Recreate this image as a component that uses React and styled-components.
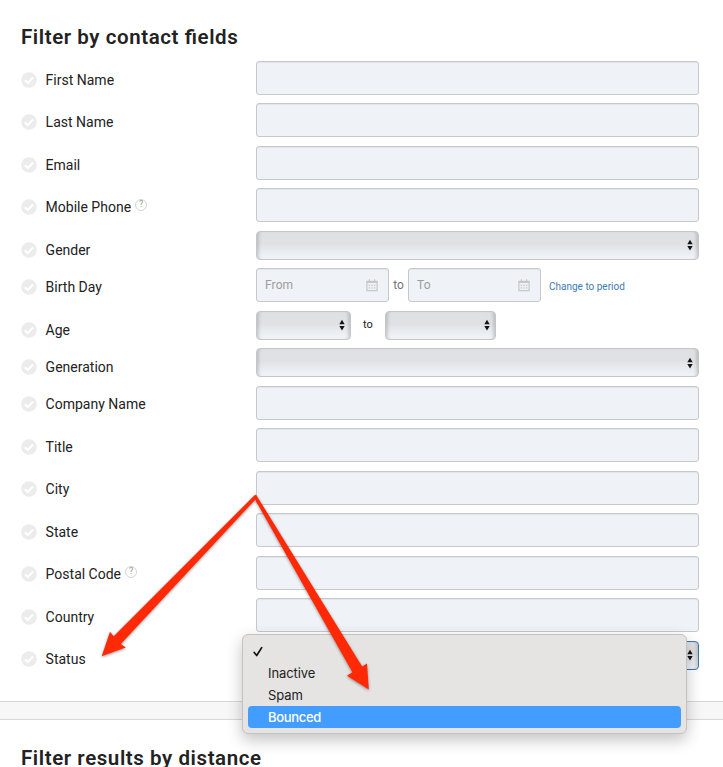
import React from "react";
import styled, { createGlobalStyle, css } from "styled-components";

const fields = [
  { label: "First Name", type: "input" },
  { label: "Last Name", type: "input" },
  { label: "Email", type: "input" },
  { label: "Mobile Phone", type: "input", help: true },
  { label: "Gender", type: "select" },
  { label: "Birth Day", type: "dates" },
  { label: "Age", type: "range" },
  { label: "Generation", type: "select" },
  { label: "Company Name", type: "input" },
  { label: "Title", type: "input" },
  { label: "City", type: "input" },
  { label: "State", type: "input" },
  { label: "Postal Code", type: "input", help: true },
  { label: "Country", type: "input" },
  { label: "Status", type: "status" },
];

const statuses = ["", "Inactive", "Spam", "Bounced"];

const CheckCircle = () => (
  <svg width="16" height="16" viewBox="0 0 16 16">
    <circle cx="8" cy="8" r="7.8" fill="#ececec" />
    <path
      d="M3.9 8.3 6.8 11 12.1 5.5"
      fill="none"
      stroke="#fff"
      strokeWidth="2.2"
    />
  </svg>
);

const CalendarIcon = () => (
  <svg width="12" height="13" viewBox="0 0 12 13">
    <path
      d="M.9 2.3h10.2v9.4H.9zM.9 3.4h10.2M3.3.3v2.6M8.7.3v2.6"
      fill="none"
      stroke="#c6c7c8"
      strokeWidth="1.2"
    />
    <path
      d="M2.6 6.4h1.5m1.1 0h1.5m1.1 0h1.5M2.6 8.8h1.5m1.1 0h1.5m1.1 0h1.5"
      stroke="#c6c7c8"
      strokeWidth="1.2"
    />
  </svg>
);

const Arrows = () => (
  <svg width="6" height="12" viewBox="0 0 6 12">
    <path d="M3 .7 5.7 5.2H.3zM3 11.5.3 7h5.4z" fill="#151515" />
  </svg>
);

const Tick = () => (
  <svg width="10" height="11" viewBox="0 0 10 11">
    <path
      d="M1.2 6.5 3.7 9.5 8.7 1.6"
      fill="none"
      stroke="#111"
      strokeWidth="1.7"
      strokeLinecap="round"
      strokeLinejoin="round"
    />
  </svg>
);

const DateInput = ({ placeholder }) => (
  <DateBox>
    {placeholder}
    <CalendarIcon />
  </DateBox>
);

const SelectBox = ({ width, active }) => (
  <Select $width={width} $active={active}>
    <Arrows />
  </Select>
);

const StatusSelect = () => (
  <StatusWrapper>
    <SelectBox active />
    <Menu>
      {statuses.map((status) => (
        <Option key={status} $selected={status === "Bounced"}>
          <OptionTick>{!status && <Tick />}</OptionTick>
          {status}
        </Option>
      ))}
    </Menu>
  </StatusWrapper>
);

const Control = ({ type }) => {
  switch (type) {
    case "select":
      return <SelectBox />;
    case "dates":
      return (
        <>
          <DateInput placeholder="From" />
          <DateTo>to</DateTo>
          <DateInput placeholder="To" />
          <PeriodLink>Change to period</PeriodLink>
        </>
      );
    case "range":
      return (
        <>
          <SelectBox width={95} />
          <AgeTo>to</AgeTo>
          <SelectBox width={111} />
        </>
      );
    case "status":
      return <StatusSelect />;
    default:
      return <Input />;
  }
};

const App = () => {
  return (
    <Page>
      <GlobalStyle />
      <Section>
        <Title>Filter by contact fields</Title>
        {fields.map(({ label, type, help }) => (
          <Row
            key={label}
            $short={["select", "range", "status"].includes(type)}
          >
            <Label>
              <CheckCircle />
              <span>{label}</span>
              {help && <Help>?</Help>}
            </Label>
            <Controls>
              <Control type={type} />
            </Controls>
          </Row>
        ))}
      </Section>
      <Divider />
      <Section $last>
        <Title>Filter results by distance</Title>
      </Section>
      <Pointers viewBox="0 0 723 767">
        <path d="M255.3 494.5 113.7 636.2 110 631.7 101.7 656.2 125.8 647.4 120.8 644 256.6 498.2z" />
        <path d="M254 497.6 352.4 672.3 347 675.7 368.8 689.4 367 663.6 362.2 666.6 255.9 494.4z" />
      </Pointers>
    </Page>
  );
};

const GlobalStyle = createGlobalStyle`
  * {
    box-sizing: border-box;
  }
  body {
    margin: 0;
    background: #fff;
    color: #222;
    font-family: Roboto, sans-serif;
  }
  svg {
    display: block;
    flex-shrink: 0;
  }
`;

const Page = styled.main`
  position: relative;
  width: 723px;
  height: 767px;
  overflow: hidden;
`;

const Section = styled.section`
  padding: ${({ $last }) => ($last ? "24px" : "23px")} 24px 0 21px;
`;

const Title = styled.h2`
  margin: 0;
  height: 37.9px;
  font-size: 20.5px;
  font-weight: 600;
  line-height: 29px;
  letter-spacing: 0.58px;
  font-feature-settings: "liga" 1;
  white-space: nowrap;
`;

const Row = styled.div`
  display: flex;
  align-items: flex-start;
  height: ${({ $short }) => ($short ? "37.4px" : "42.5px")};
`;

const Label = styled.div`
  display: flex;
  align-items: center;
  width: 235px;
  height: 37.5px;
  font-size: 14px;

  span {
    margin-left: 8.6px;
  }
`;

const Help = styled.sup`
  display: flex;
  align-items: center;
  justify-content: center;
  width: 12px;
  height: 12px;
  margin: -5px 0 0 4px;
  border: 1px solid #d4d4d4;
  border-radius: 50%;
  color: #999;
  font-size: 9px;
  line-height: 1;
`;

const Controls = styled.div`
  display: flex;
  flex: 1;
`;

const fieldBox = css`
  height: 34px;
  border: 1px solid #c5c8cc;
  border-radius: 3px;
  background: #eff2f7;
  box-shadow: inset 0 1px 1px rgba(0, 0, 0, 0.06);
`;

const Input = styled.div`
  ${fieldBox}
  width: 443px;
`;

const DateBox = styled.div`
  ${fieldBox}
  display: flex;
  align-items: center;
  justify-content: space-between;
  width: 133px;
  padding: 0 10px 0 8px;
  color: #9b9da0;
  font-size: 12px;
  letter-spacing: 0.1px;
`;

const DateTo = styled.span`
  width: 19px;
  color: #777;
  font-size: 12px;
  line-height: 34px;
  text-align: center;
`;

const PeriodLink = styled.a`
  margin-left: 8px;
  color: #3c7cb2;
  font-size: 10px;
  line-height: 37px;
  white-space: nowrap;
`;

const AgeTo = styled.span`
  width: 34px;
  font-size: 11px;
  line-height: 27px;
  text-align: center;
`;

const Select = styled.div`
  display: flex;
  align-items: center;
  justify-content: flex-end;
  width: ${({ $width }) => $width || 443}px;
  height: 29px;
  padding-right: 5px;
  border: 1px solid ${({ $active }) => ($active ? "#3577b0" : "#c4c6c9")};
  border-radius: 4px;
  background: linear-gradient(#dfe0e3 0%, #e0e1e4 45%, #e8ebef 70%, #f1f4f8 100%);
  box-shadow: inset 4px 0 3px -2px rgba(0, 0, 0, 0.14),
    inset -4px 0 3px -2px rgba(0, 0, 0, 0.14);
`;

const StatusWrapper = styled.div`
  position: relative;
`;

const Menu = styled.div`
  position: absolute;
  top: -7px;
  left: -14px;
  z-index: 1;
  width: 445px;
  height: 100px;
  padding: 5px;
  border: 1px solid #c3c2c1;
  border-radius: 6px;
  background: #e6e4e2;
  box-shadow: 0 6px 16px rgba(0, 0, 0, 0.24);
`;

const Option = styled.div`
  display: flex;
  align-items: center;
  height: 22px;
  border-radius: 4px;
  background: ${({ $selected }) => ($selected ? "#429dff" : "transparent")};
  color: ${({ $selected }) => ($selected ? "#fff" : "#222")};
  font-family: Inter, sans-serif;
  font-size: 13px;
  font-weight: ${({ $selected }) => ($selected ? 500 : 400)};
  letter-spacing: ${({ $selected }) => ($selected ? "-0.3px" : "-0.1px")};
`;

const OptionTick = styled.span`
  width: 20px;
  padding: 1px 0 0 5px;
`;

const Divider = styled.div`
  height: 19px;
  margin-top: 23.2px;
  border: 1px solid #d8d8d8;
  border-width: 1px 0;
  background: #f7f7f7;
`;

// drawn over the form and the open menu
const Pointers = styled.svg`
  position: absolute;
  inset: 0;
  z-index: 2;
  width: 723px;
  height: 767px;
  fill: #ff2a05;
  filter: drop-shadow(0 1px 1.5px rgba(0, 0, 0, 0.4));
  pointer-events: none;
`;

export default App;
